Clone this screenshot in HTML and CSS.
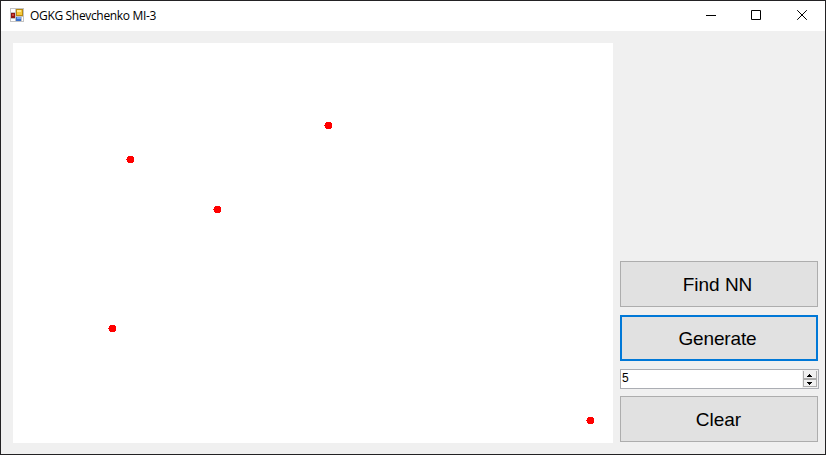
FILE: index.html
```html
<!DOCTYPE html>
<html lang="en">
<head>
<meta charset="utf-8">
<title>OGKG Shevchenko MI-3</title>
<link rel="stylesheet" href="styles.css">
</head>
<body>
<div class="window">
  <header class="titlebar">
    <svg class="app-icon" width="14" height="14" viewBox="0 0 14 14" shape-rendering="crispEdges">
      <path fill="#c3c3c3" d="M0 0h14v14H0z"/>
      <path fill="#fff" d="M1 1h4v3H1zM1 11h4v2H1zM12 9h1v4h-1z"/>
      <path fill="#b98a10" d="M6 1h7v7H6z"/>
      <path fill="#f6c93a" d="M7 2h5v5H7z"/>
      <path fill="#ffe88c" d="M7 2h4v2H7z"/>
      <path fill="#8e1712" d="M1 5h4v5H1z"/>
      <path fill="#d0423a" d="M2 6h2v2H2z"/>
      <path fill="#3a6fc9" d="M6 9h5v4H6z"/>
      <path fill="#76a8f5" d="M7 9h4v2H7z"/>
    </svg>
    <h1 class="title">OGKG Shevchenko MI-3</h1>
    <div class="controls">
      <svg width="10" height="10" viewBox="0 0 10 10"><path d="M0 5.5h10"/></svg>
      <svg width="10" height="10" viewBox="0 0 10 10"><path d="M.5 .5h9v9h-9z"/></svg>
      <svg width="10" height="10" viewBox="0 0 10 10"><path d="M.2 .2l9.6 9.6M9.8 .2L.2 9.8"/></svg>
    </div>
  </header>
  <main class="client">
    <svg class="plot" width="600" height="400" viewBox="0 0 600 400" shape-rendering="crispEdges">
      <defs><path id="point" fill="#f00" d="M2 0h5v1h1v5h-1v1h-5v-1h-1v-2h-1v-1h1v-2h1z"/></defs>
      <use href="#point" x="311" y="79"/>
      <use href="#point" x="113" y="113"/>
      <use href="#point" x="200" y="163"/>
      <use href="#point" x="95" y="282"/>
      <use href="#point" x="573" y="374"/>
    </svg>
    <aside class="panel">
      <button class="button find">Find NN</button>
      <button class="button generate">Generate</button>
      <div class="spinner">
        <span class="value">5</span>
        <div class="steps">
          <span class="step"><svg width="5" height="3" viewBox="0 0 5 3" shape-rendering="crispEdges"><path d="M2 0h1v1h1v1h1v1H0V2h1V1h1z"/></svg></span>
          <span class="step"><svg width="5" height="3" viewBox="0 0 5 3" shape-rendering="crispEdges"><path d="M0 0h5v1H4v1H3v1H2V2H1V1H0z"/></svg></span>
        </div>
      </div>
      <button class="button clear">Clear</button>
    </aside>
  </main>
</div>
</body>
</html>
```
FILE: styles.css
```css
* { box-sizing: border-box; }
body { margin: 0; }
.window {
  width: 826px;
  height: 455px;
  border: 1px solid #232224;
  background: #f0f0f0;
  display: flex;
  flex-direction: column;
}
.titlebar {
  height: 30px;
  padding: 0 18px 2px 9px;
  background: #fff;
  display: flex;
  align-items: center;
}
.app-icon { display: block; }
.title {
  margin: 2px 0 0 6px;
  font: 400 12px/16px "Open Sans", sans-serif;
  letter-spacing: -0.33px;
  color: #000;
  white-space: nowrap;
}
.controls {
  margin-left: auto;
  display: flex;
  gap: 36px;
}
.controls svg { display: block; fill: none; stroke: #000; overflow: visible; }
.controls svg:first-child { margin-right: -1px; }
.client {
  flex: 1;
  display: flex;
  gap: 7px;
  padding: 12px 6px 11px 12px;
}
.plot { display: block; background: #fff; flex: none; }
.panel {
  width: 199px;
  display: flex;
  flex-direction: column;
  padding-top: 218px;
}
.button {
  width: 198px;
  height: 46px;
  padding: 2px 3px 0 0;
  border: 1px solid #adadad;
  border-radius: 0;
  background: #e1e1e1;
  color: #000;
  font: 400 19px/22px "Liberation Sans", Arial, sans-serif;
  flex: none;
}
.generate {
  margin-top: 8px;
  border: 2px solid #0078d7;
  letter-spacing: -0.15px;
}
.clear { padding-right: 1px; }
.spinner {
  width: 199px;
  height: 20px;
  margin: 8px 0 7px;
  border: 1px solid #abadb3;
  background: #fff;
  display: flex;
  justify-content: space-between;
  flex: none;
}
.value { font: 400 12px/16px "Liberation Sans", Arial, sans-serif; padding-left: 1px; }
.steps {
  width: 16px;
  padding: 1px;
  background: #f0f0f0;
  display: flex;
  flex-direction: column;
}
.step {
  height: 8px;
  border: 1px solid #acacac;
  border-top: 0;
  background: #f0f0f0;
  display: flex;
  align-items: center;
  justify-content: center;
}
.step + .step { border-top: 1px solid #acacac; }
.step svg { display: block; width: 5px; flex: none; margin-left: -1px; }
.step:first-child svg { margin-top: 1px; }
```
